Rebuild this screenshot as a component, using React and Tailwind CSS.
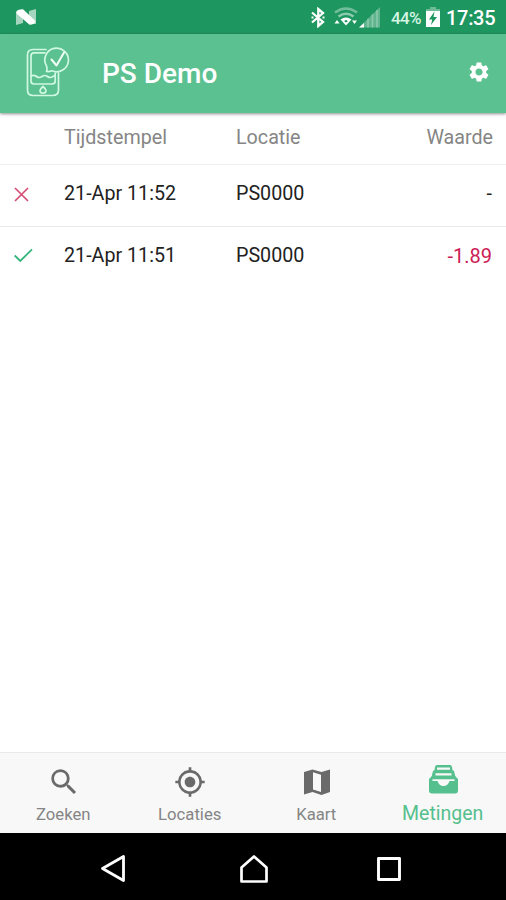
import React from "react";
import { MdSearch, MdMyLocation, MdSettings } from "react-icons/md";

function StatusBar() {
  return (
    <div className="flex h-[34px] shrink-0 items-center bg-[#1e965f] pl-[16px] pr-[11px] text-white">
      <svg width="20" height="16" viewBox="0 0 20 16">
        <path d="M0 3H7V14L0 16Z M13 2L20 0V15H13Z" fill="#a5d5bf" />
        <path d="M0.500 2Q3 0 7 0.300L19.500 12Q19 15.500 13.500 15.800L0.500 4.500Z" fill="#fff" />
      </svg>
      <svg className="ml-auto mr-[5px]" width="14" height="21" viewBox="0 0 14 21" fill="none" stroke="#fff" strokeWidth="2.300">
        <path d="M1 5.500L12 15L7.300 19V2L12 6L1 15.500" />
        <path d="M0.500 10.500H2.500M11.500 10.500H13.500" strokeWidth="2" />
      </svg>
      <svg className="ml-[4px]" width="24" height="20" viewBox="0 0 24 20" fill="none">
        <path d="M1 5.500Q12-2.500 23 5.500" stroke="#72bd9b" strokeWidth="2.600" />
        <path d="M4.500 9.500Q12 4 19.500 9.500" stroke="#8bcaae" strokeWidth="2.600" />
        <path d="M6.500 12.500Q12 8.500 17.500 12.500L12 18.500Z" fill="#fff" />
        <path d="M10.200 14.200L12 12.800L13.800 14.200L12 15.500Z" fill="#1e965f" />
        <path d="M0.500 16.500L3 13L5.500 16.500Z M18 13.500H23L20.500 17Z" fill="#fff" />
      </svg>
      <svg className="ml-[1px]" width="22" height="21" viewBox="0 0 22 21">
        <path d="M0 20.500L21 0V20.500Z" fill="#62b48f" />
        <path d="M9 11.700V20.500M13.500 7.300V20.500M18 3V20.500" stroke="#8acaad" strokeWidth="1.500" />
        <path d="M0 20.500L5 16V20.500Z" fill="#fff" />
      </svg>
      <span className="ml-[10px] mt-[2px] w-[31px] whitespace-nowrap text-[17px] font-medium leading-none tracking-[-0.7px] text-[#d5f5e5]">44%</span>
      <svg className="ml-[4px]" width="14" height="20" viewBox="0 0 14 20">
        <path d="M4 0H10V2H14V7H0V2H4Z" fill="#6dbb96" />
        <path d="M0 4H14V20H0Z" fill="#fff" />
        <path d="M8.500 4.500L3 12.500H6.200L5 18L11 10H7.500Z" fill="#1e965f" />
      </svg>
      <span className="ml-[6px] mt-[2px] w-[49px] whitespace-nowrap text-[20px] font-medium leading-none tracking-[-0.3px]">17:35</span>
    </div>
  );
}

function Logo() {
  return (
    <svg width="46" height="52" viewBox="0 0 46 52" fill="none" stroke="#d0f8e2" strokeWidth="1.700" strokeLinecap="round" strokeLinejoin="round">
      <path d="M20 2.500H7Q1.500 2.500 1.500 8V43Q1.500 48.500 7 48.500H26.500Q32.500 48.500 32.500 43V26" />
      <path d="M19 5.800H8Q5 5.800 5 9V34Q5 37 8 37H26Q29.200 37 29.200 34V26" />
      <path d="M5 29Q8 27.500 10.500 29.500T16 29.500T21.500 29.500T27 29.500L29 28.500" />
      <path d="M20.500 24.500Q21.500 22 20.500 19A11.800 11.800 0 1 1 26 23.800Q23 25 20.500 24.500Z" />
      <path d="M25.500 12.500L30.500 18.500L38 5.500" stroke="#f0fff6" strokeWidth="2" />
      <path d="M17 39.500Q14 42 14 43.500A3 2.700 0 0 0 20 43.500Q20 42 17 39.500Z" />
    </svg>
  );
}

function Header() {
  return (
    <header className="z-10 flex h-[79px] shrink-0 items-center bg-[#5cc191] pl-[26px] pr-[15px] text-white shadow-[0_1px_3px_rgba(0,0,0,0.45)]">
      <div className="-mt-[2px]"><Logo /></div>
      <h1 className="ml-[30px] text-[28px] font-medium leading-none">PS Demo</h1>
      <MdSettings className="-mt-[4px] ml-auto size-[24px]" />
    </header>
  );
}

function Cross() {
  return (
    <svg width="15" height="15" viewBox="0 0 15 15" fill="none" stroke="#d64c75" strokeWidth="1.700">
      <path d="M1 1L14 14M14 1L1 14" />
    </svg>
  );
}

function Check() {
  return (
    <svg className="-mt-[2px]" width="19" height="15" viewBox="0 0 19 15" fill="none" stroke="#35b67c" strokeWidth="1.800">
      <path d="M0.700 7.500L6.300 13L18 1.300" />
    </svg>
  );
}

const rows = [
  { ok: false, time: "21-Apr 11:52", place: "PS0000", value: "-" },
  { ok: true, time: "21-Apr 11:51", place: "PS0000", value: "-1.89" },
];

function Measurements() {
  return (
    <main className="flex-1 bg-white text-[19.7px] leading-[24px] text-[#222]">
      <div className="grid h-[52px] grid-cols-[50px_172px_1fr_auto] items-center border-b border-[#efefef] pb-[1px] pl-[14px] pr-[13px] text-[#858585]">
        <span />
        <span>Tijdstempel</span>
        <span>Locatie</span>
        <span>Waarde</span>
      </div>
      {rows.map((row) => (
        <div key={row.time} className={"grid h-[62px] grid-cols-[50px_172px_1fr_auto] items-center pl-[14px] pr-[14px] " + (row.ok ? "pb-[4px]" : "border-b border-[#e9e9e9] pb-[3px]")}>
          {row.ok ? <Check /> : <Cross />}
          <span>{row.time}</span>
          <span>{row.place}</span>
          <span className={row.ok ? "-mt-[1px] text-[20px] text-[#cc2055]" : ""}>{row.value}</span>
        </div>
      ))}
    </main>
  );
}

function MapIcon() {
  return (
    <svg width="26" height="26" viewBox="0 0 26 26" fill="#6a6a6a">
      <path d="M0 3L8.500 0.500L17.500 3L26 0.500V23L17.500 26L8.500 23L0 25.500Z" />
      <path d="M9 3.300L17 5.700V23L9 20.500Z" fill="#f8f8f8" />
    </svg>
  );
}

function FilingIcon() {
  return (
    <svg width="29" height="29" viewBox="0 0 29 29">
      <path d="M8 0H21Q22.500 0 23 2L23.500 5L25 6L26.500 12H2.500L4 6L5.500 5L6 2Q6.500 0 8 0Z" fill="#56bf8e" />
      <path d="M0 14L3 11H26L29 14V25.500Q29 28.500 26 28.500H3Q0 28.500 0 25.500Z" fill="#56bf8e" />
      <path d="M8 3.700H21M6.500 9.300H22.500" stroke="#f8f8f8" strokeWidth="2.200" />
      <path d="M3.500 14.200H25.500V16H20.500Q19 21 14.500 21T8.500 16H3.500Z" fill="#f8f8f8" />
    </svg>
  );
}

function Tab({ icon, label, active }) {
  return (
    <div className={"flex flex-1 flex-col items-center " + (active ? "text-[#56bf8e]" : "text-[#6a6a6a]")}>
      <div className={"flex h-[34px] items-center pl-[1px] " + (active ? "mt-[9px]" : "mt-[12px]")}>{icon}</div>
      <span className={active ? "mt-[6px] text-[19.5px] leading-[24px]" : "mt-[5px] text-[16.7px] leading-[22px] text-[#858585]"}>{label}</span>
    </div>
  );
}

function TabBar() {
  return (
    <nav className="flex h-[81px] shrink-0 border-t border-[#e9e9e9] bg-[#f8f8f8]">
      <Tab icon={<MdSearch className="size-[34px]" />} label="Zoeken" />
      <Tab icon={<MdMyLocation className="size-[32px]" />} label="Locaties" />
      <Tab icon={<MapIcon />} label="Kaart" />
      <Tab icon={<FilingIcon />} label="Metingen" active />
    </nav>
  );
}

function SystemBar() {
  return (
    <div className="flex h-[67px] shrink-0 items-center bg-black pl-[100px] pt-[4px]">
      <svg width="26" height="29" viewBox="0 0 26 29" fill="none" stroke="#fff" strokeWidth="2.800" strokeLinejoin="round">
        <path d="M2.500 14.500L23.500 2.500V26.500Z" />
      </svg>
      <svg className="ml-[113px]" width="30" height="30" viewBox="0 0 30 30" fill="none" stroke="#fff" strokeWidth="2.700" strokeLinejoin="round">
        <path d="M2.500 13.500L15 2.500L27.500 13.500V27.500H2.500Z" />
      </svg>
      <svg className="ml-[107px]" width="26" height="26" viewBox="0 0 26 26" fill="none" stroke="#fff" strokeWidth="2.900" strokeLinejoin="round">
        <path d="M2.500 2.500H23.500V23.500H2.500Z" />
      </svg>
    </div>
  );
}

export default function App() {
  return (
    <div className="flex h-[900px] w-[506px] flex-col overflow-hidden bg-white font-[Roboto,sans-serif]">
      <StatusBar />
      <Header />
      <Measurements />
      <TabBar />
      <SystemBar />
    </div>
  );
}
